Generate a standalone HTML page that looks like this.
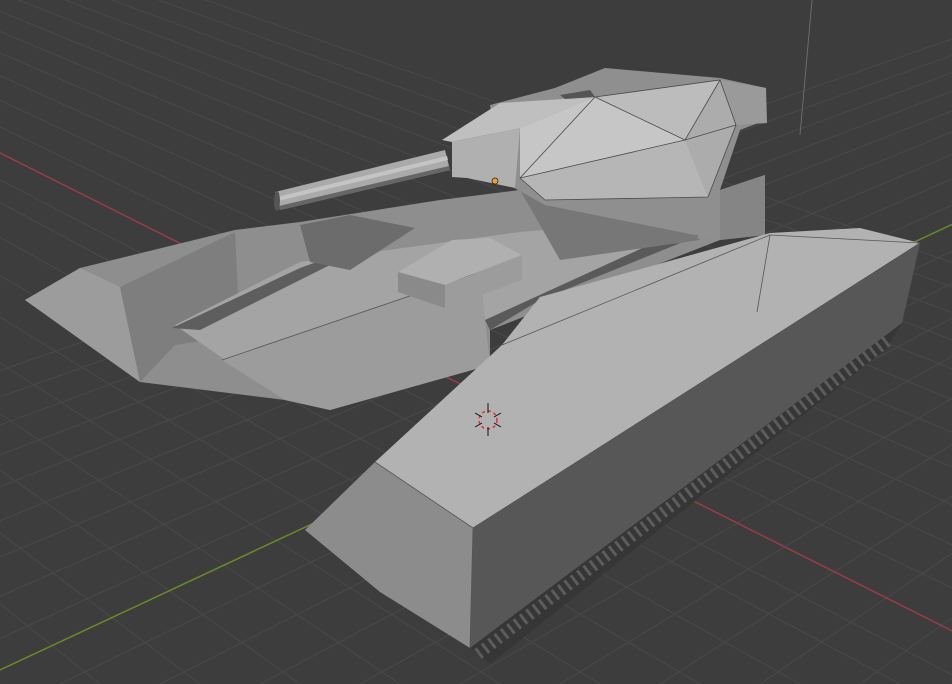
<!DOCTYPE html>
<html><head><meta charset="utf-8"><style>html,body{margin:0;padding:0;background:#3d3d3d;overflow:hidden}svg{display:block}</style></head><body>
<svg width="952" height="684" viewBox="0 0 952 684" xmlns="http://www.w3.org/2000/svg">
<rect width="952" height="684" fill="#3d3d3d"/>
<g stroke="#494949" stroke-width="1">
<line x1="-1500" y1="-600" x2="-400" y2="684"/><line x1="-1500" y1="-600" x2="-300" y2="684"/><line x1="-1500" y1="-600" x2="-200" y2="684"/><line x1="-1500" y1="-600" x2="-100" y2="684"/><line x1="-1500" y1="-600" x2="0" y2="684"/><line x1="-1500" y1="-600" x2="100" y2="684"/><line x1="-1500" y1="-600" x2="200" y2="684"/><line x1="-1500" y1="-600" x2="300" y2="684"/><line x1="-1500" y1="-600" x2="400" y2="684"/><line x1="-1500" y1="-600" x2="500" y2="684"/><line x1="-1500" y1="-600" x2="600" y2="684"/><line x1="-1500" y1="-600" x2="700" y2="684"/><line x1="-1500" y1="-600" x2="800" y2="684"/><line x1="-1500" y1="-600" x2="900" y2="684"/><line x1="-1500" y1="-600" x2="970" y2="684"/><line x1="-1500" y1="-600" x2="1150" y2="684"/><line x1="-1500" y1="-600" x2="1250" y2="684"/><line x1="-1500" y1="-600" x2="1350" y2="684"/><line x1="-1500" y1="-600" x2="1450" y2="684"/><line x1="-1500" y1="-600" x2="1550" y2="684"/><line x1="-1500" y1="-600" x2="1650" y2="684"/><line x1="-1500" y1="-600" x2="1750" y2="684"/><line x1="-1500" y1="-600" x2="1850" y2="684"/><line x1="-1500" y1="-600" x2="1950" y2="684"/><line x1="-1500" y1="-600" x2="2050" y2="684"/><line x1="-1500" y1="-600" x2="2150" y2="684"/>
<line x1="2500" y1="-500" x2="-900" y2="684"/><line x1="2500" y1="-500" x2="-800" y2="684"/><line x1="2500" y1="-500" x2="-700" y2="684"/><line x1="2500" y1="-500" x2="-600" y2="684"/><line x1="2500" y1="-500" x2="-500" y2="684"/><line x1="2500" y1="-500" x2="-400" y2="684"/><line x1="2500" y1="-500" x2="-300" y2="684"/><line x1="2500" y1="-500" x2="-200" y2="684"/><line x1="2500" y1="-500" x2="-100" y2="684"/><line x1="2500" y1="-500" x2="60" y2="684"/><line x1="2500" y1="-500" x2="160" y2="684"/><line x1="2500" y1="-500" x2="260" y2="684"/><line x1="2500" y1="-500" x2="360" y2="684"/><line x1="2500" y1="-500" x2="460" y2="684"/><line x1="2500" y1="-500" x2="560" y2="684"/><line x1="2500" y1="-500" x2="660" y2="684"/><line x1="2500" y1="-500" x2="760" y2="684"/><line x1="2500" y1="-500" x2="860" y2="684"/><line x1="2500" y1="-500" x2="960" y2="684"/><line x1="2500" y1="-500" x2="1060" y2="684"/>
</g>
<line x1="-1500" y1="-600" x2="1058" y2="684" stroke="#9a3c48" stroke-width="1.5"/>
<line x1="2500" y1="-500" x2="-30" y2="684" stroke="#6a8a2a" stroke-width="1.5"/>
<line x1="812" y1="0" x2="800" y2="135" stroke="#6a6a6a" stroke-width="1"/>

<!-- hull -->
<polygon points="25,300 80,268 235,230 300,222 440,200 520,190 660,200 720,240 490,330 490,365 330,410 285,400 140,382" fill="#8e8e8e"/>
<polygon points="25,300 80,268 120,287 140,382" fill="#9c9c9c"/>
<polygon points="120,287 235,232 240,335 175,345 140,382" fill="#7e7e7e"/>
<polygon points="175,325 300,262 520,232 600,225 690,235 540,300 490,320 225,360" fill="#a4a4a4"/>
<polygon points="172,328 300,268 345,252 330,265 200,330" fill="#5e5e5e"/>
<polygon points="300,225 350,215 415,228 350,270 310,262" fill="#6c6c6c"/>
<polygon points="222,360 480,272 490,365 330,410 285,400" fill="#9c9c9c"/>
<polyline points="222,360 480,272" fill="none" stroke="#555" stroke-width="0.8"/>
<polygon points="485,320 660,240 700,235 540,300 490,330" fill="#5a5a5a"/>
<polygon points="520,190 660,200 700,240 560,260" fill="#777"/>
<!-- deck box -->
<polygon points="398,272 452,240 490,238 522,255 470,275 445,285" fill="#b0b0b0"/>
<polygon points="398,272 445,285 445,308 398,292" fill="#8a8a8a"/>
<polygon points="445,285 522,255 522,280 445,308" fill="#9c9c9c"/>

<!-- turret -->
<polygon points="490,105 555,88 605,68 720,78 766,88 766,120 740,130 720,190 765,175 765,235 720,240 545,205 500,180" fill="#8f8f8f"/>
<polygon points="720,190 765,175 765,235 720,240" fill="#858585"/>
<polygon points="442,140 500,103 595,97 520,128 452,142" fill="#bfbfbf"/>
<polygon points="452,142 520,128 515,188 467,178 452,177" fill="#b0b0b0"/>
<polygon points="595,97 720,80 685,140" fill="#bcbcbc"/>
<polygon points="595,97 685,140 520,178 520,128" fill="#c6c6c6"/>
<polygon points="520,178 685,140 708,197 545,200" fill="#b6b6b6"/>
<polygon points="685,140 720,80 736,125 708,197" fill="#acacac"/>
<polygon points="720,80 766,88 767,123 736,125" fill="#9a9a9a"/>
<polygon points="560,95 590,90 595,97 565,99" fill="#555"/>
<g fill="none" stroke="#4a4a4a" stroke-width="0.8"><polyline points="595,97 720,80 736,125 708,197 545,200 520,178 595,97 685,140 720,80"/><polyline points="685,140 736,125"/><polyline points="685,140 520,178"/></g>
<!-- barrel -->
<polygon points="275,192 445,150 450,170 280,210" fill="#aaaaaa"/>
<polygon points="277,197 447,156 448,160 278,201" fill="#c4c4c4"/>
<polygon points="279,206 449,166 450,170 280,210" fill="#666"/>
<ellipse cx="277" cy="201" rx="3" ry="10" fill="#555"/>
<circle cx="495" cy="181" r="3" fill="#f0a030" stroke="#222" stroke-width="0.8"/>

<!-- right track housing -->
<polygon points="470,648 902,323 885,350 490,664" fill="#363636"/>
<line x1="478" y1="654" x2="888" y2="340" stroke="#5c5c5c" stroke-width="12" stroke-dasharray="3 5"/>
<polygon points="473,528 920,243 902,323 470,648" fill="#575757"/>
<polygon points="375,462 502,345 540,297 770,233 860,228 920,243 473,528" fill="#b2b2b2"/>
<polygon points="305,530 375,462 473,528 470,648 380,592" fill="#8c8c8c"/>
<g fill="none" stroke="#555" stroke-width="0.8"><polyline points="375,462 473,528 920,243"/><polyline points="473,528 470,648"/><polyline points="502,345 770,235 920,243"/><polyline points="770,235 757,312"/></g>
<circle cx="488" cy="420" r="9" fill="none" stroke="#d33" stroke-width="1.5" stroke-dasharray="3 3"/>
<g stroke="#111" stroke-width="1"><line x1="488" y1="403" x2="488" y2="413"/><line x1="488" y1="427" x2="488" y2="436"/><line x1="475" y1="413" x2="482" y2="417"/><line x1="494" y1="423" x2="501" y2="427"/><line x1="475" y1="427" x2="482" y2="423"/><line x1="494" y1="417" x2="501" y2="413"/></g>
</svg>
</body></html>
